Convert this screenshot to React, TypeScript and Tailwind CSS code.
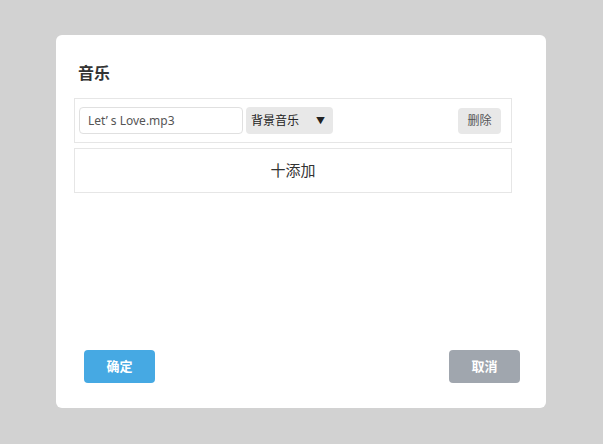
export default function App() {
  const f = { fontFamily: '"Noto Sans", "Noto Sans CJK SC", sans-serif' };
  return (
    <div className="w-[603px] h-[444px] bg-[#d2d2d2] pt-[35px] pl-[56px]" style={f}>
      <div className="w-[490px] h-[373px] bg-white rounded-[6px] relative flex flex-col pl-[18px]">
        <div className="mt-[26px] h-[24px] leading-[24px] ml-[4px] text-[16px] font-bold text-[#333]">音乐</div>
        <div className="mt-[13px] w-[438px] h-[45px] border border-[#e6e6e6] flex items-center pl-[4px] pr-[10px]">
          <div className="w-[164px] h-[27px] border border-[#e0e0e0] rounded-[4px] flex items-center pl-[8px] text-[12px] text-[#555]">Let’ s Love.mp3</div>
          <div className="ml-[3px] w-[87px] h-[27px] bg-[#e8e8e8] rounded-[4px] flex items-center pl-[5px] pr-[8px] text-[12px] text-[#222] justify-between">
            <span>背景音乐</span><span className="text-[9px]">▼</span>
          </div>
          <div className="ml-auto w-[43px] h-[26px] bg-[#e8e8e8] rounded-[4px] flex items-center justify-center text-[12px] text-[#555]">删除</div>
        </div>
        <div className="mt-[5px] w-[438px] h-[45px] border border-[#e6e6e6] flex items-center justify-center text-[15px] text-[#333]">十添加</div>
        <div className="absolute left-[28px] right-[26px] top-[315px] flex justify-between">
          <div className="w-[71px] h-[33px] bg-[#46a9e3] rounded-[4px] flex items-center justify-center text-white text-[13px] font-bold">确定</div>
          <div className="w-[71px] h-[33px] bg-[#a0a6ae] rounded-[4px] flex items-center justify-center text-white text-[13px] font-bold">取消</div>
        </div>
      </div>
    </div>
  );
}
